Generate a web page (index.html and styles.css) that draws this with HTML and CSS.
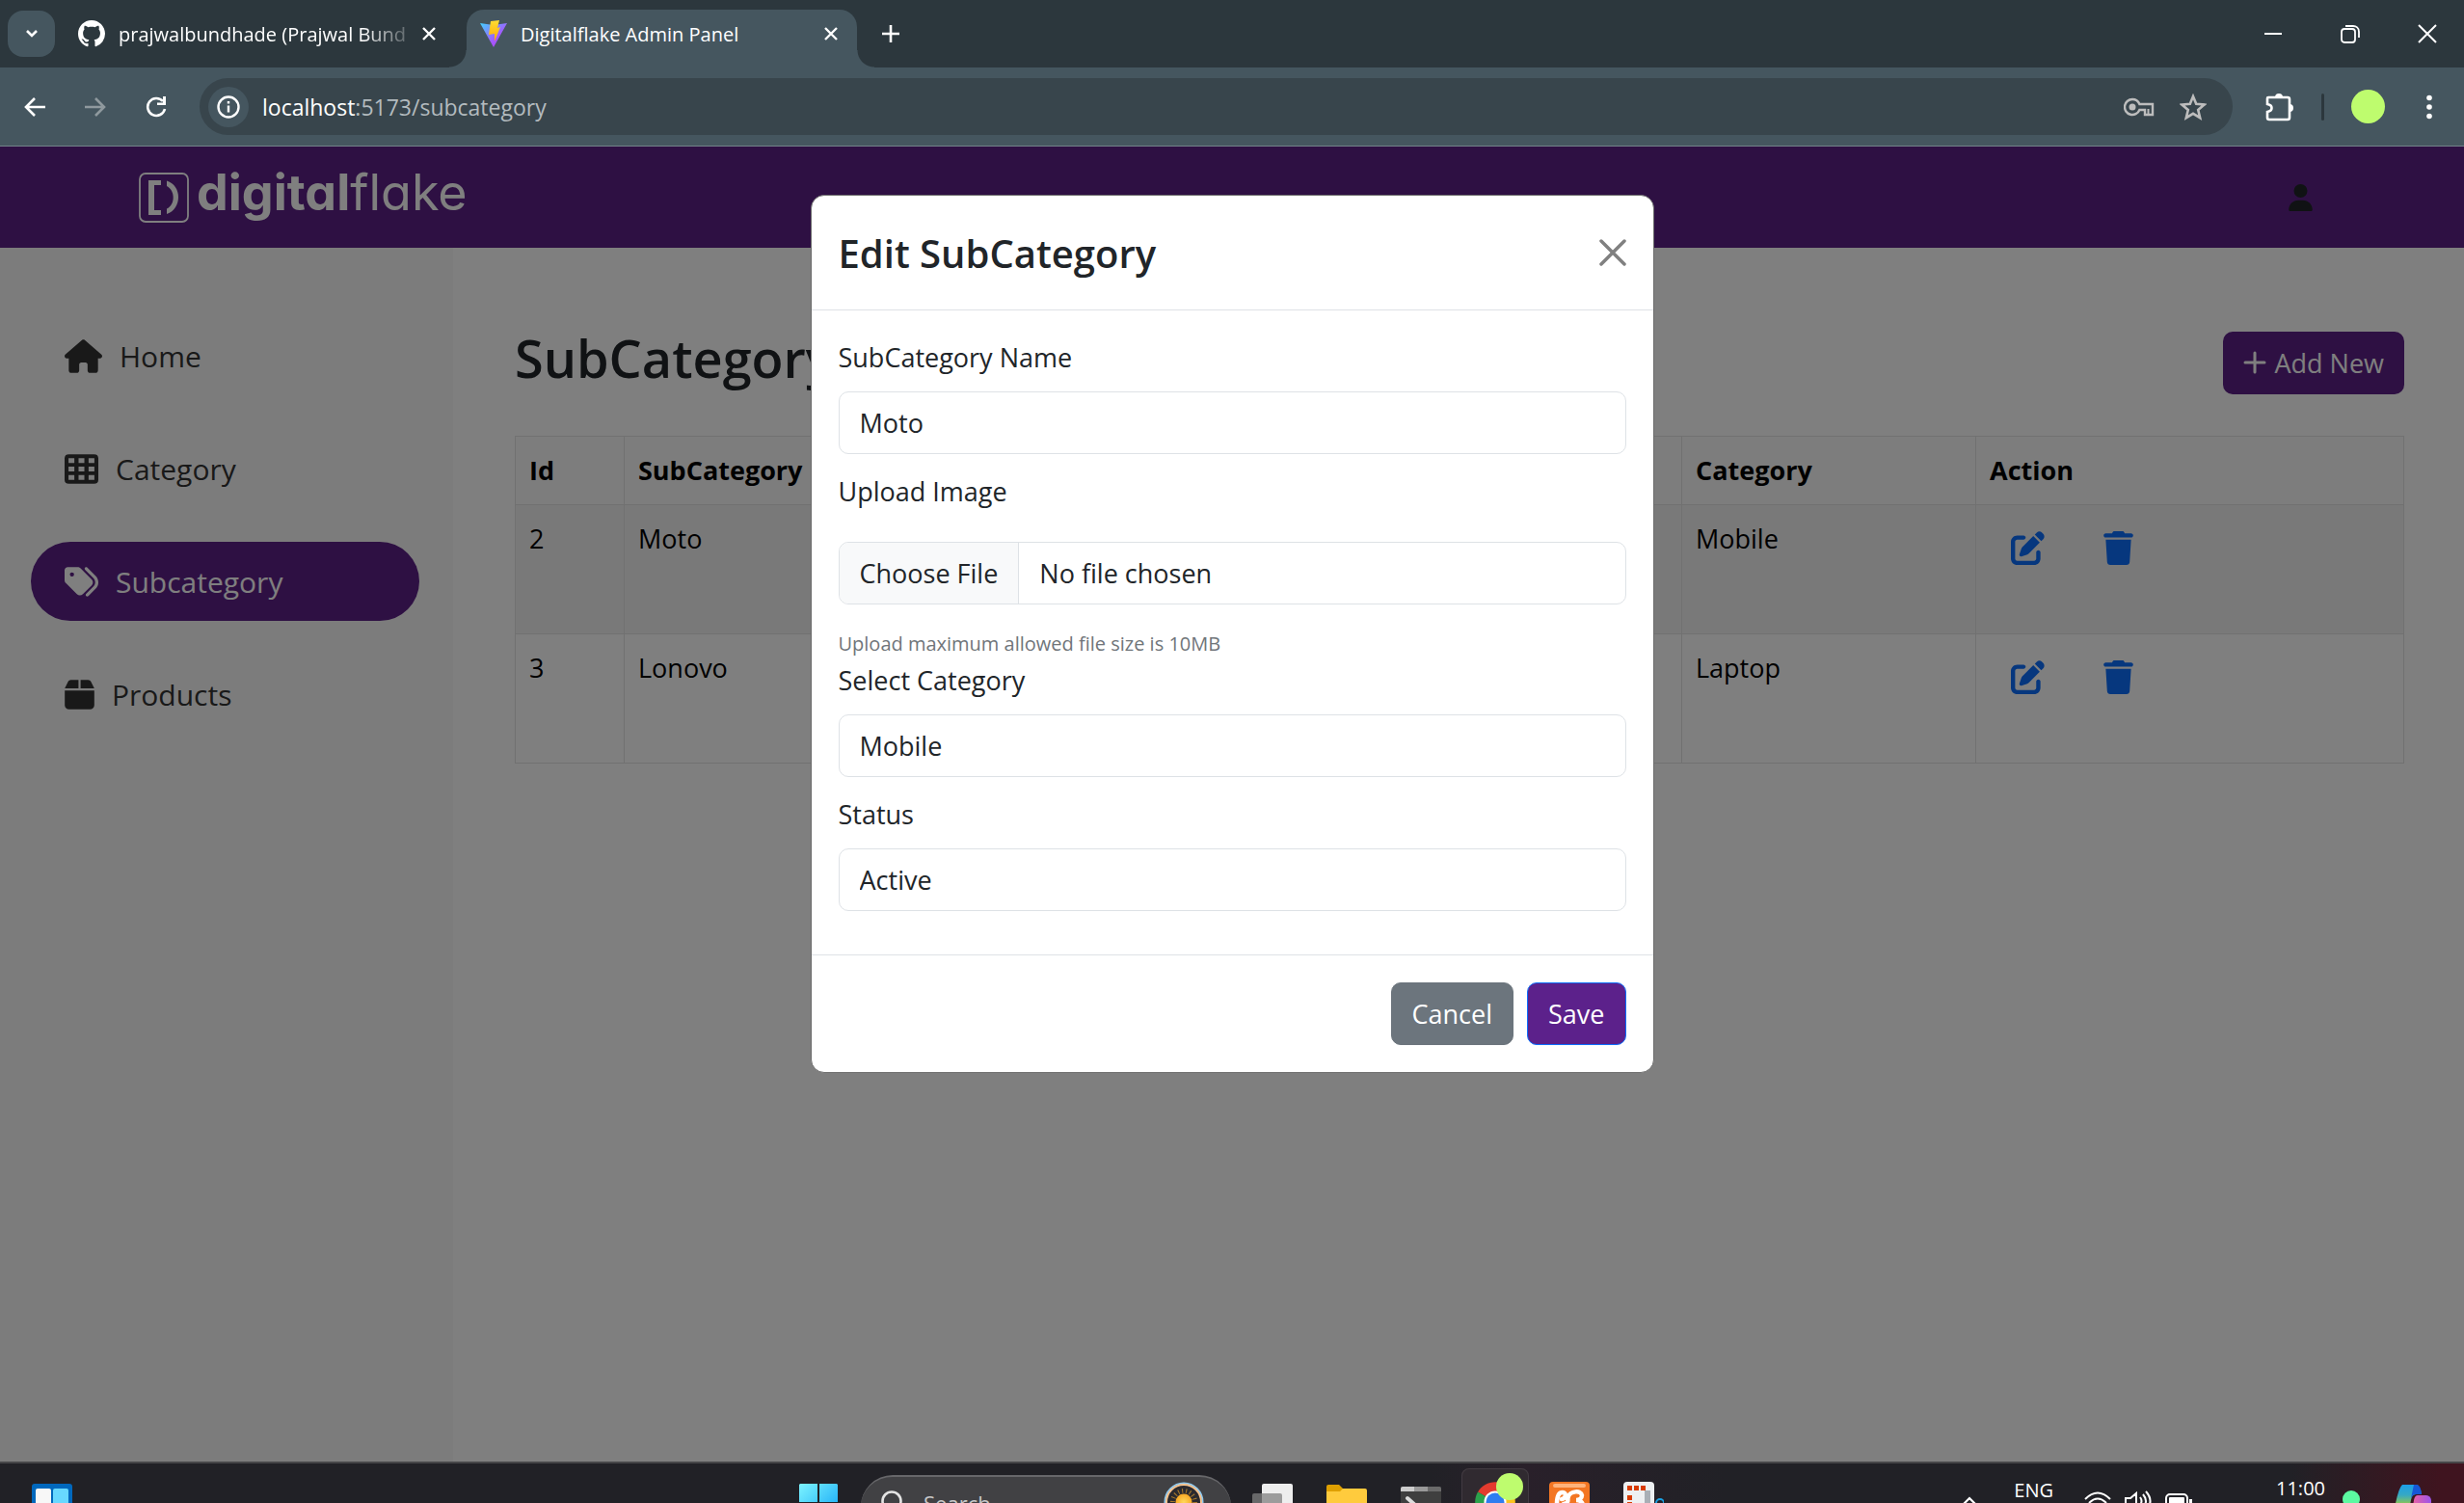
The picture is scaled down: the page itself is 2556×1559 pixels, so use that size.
FILE: index.html
```html
<!DOCTYPE html>
<html lang="en">
<head>
<meta charset="utf-8">
<title>Digitalflake Admin Panel</title>
<link rel="stylesheet" href="styles.css">
</head>
<body>
<div class="screen">

  <div class="tabstrip">
    <button class="tab-search" aria-label="Search tabs"><svg width="14" height="14" viewBox="0 0 14 14"><path d="M2 4l5 5 5-5" fill="none" stroke="#fff" stroke-width="2.6"/></svg></button>
    <div class="tab">
      <svg class="favicon" viewBox="0 0 16 16"><path fill="#fff" d="M8 0C3.58 0 0 3.58 0 8c0 3.54 2.29 6.53 5.47 7.59.4.07.55-.17.55-.38 0-.19-.01-.82-.01-1.49-2.01.37-2.53-.49-2.69-.94-.09-.23-.48-.94-.82-1.13-.28-.15-.68-.52-.01-.53.63-.01 1.08.58 1.23.82.72 1.21 1.87.87 2.33.66.07-.52.28-.87.51-1.07-1.78-.2-3.64-.89-3.64-3.95 0-.87.31-1.59.82-2.15-.08-.2-.36-1.02.08-2.12 0 0 .67-.21 2.2.82.64-.18 1.32-.27 2-.27s1.36.09 2 .27c1.53-1.04 2.2-.82 2.2-.82.44 1.1.16 1.92.08 2.12.51.56.82 1.27.82 2.15 0 3.07-1.87 3.75-3.65 3.95.29.25.54.73.54 1.48 0 1.07-.01 1.93-.01 2.2 0 .21.15.46.55.38A8.01 8.01 0 0016 8c0-4.42-3.58-8-8-8z"/></svg>
      <span class="tab-title faded">prajwalbundhade (Prajwal Bund</span>
      <button class="tab-close" aria-label="Close tab"><svg width="14" height="14" viewBox="0 0 14 14"><path d="M1 1l12 12M13 1L1 13" stroke="#fff" stroke-width="2.4"/></svg></button>
    </div>
    <div class="tab active">
      <svg class="favicon" viewBox="0 0 28 28"><defs><linearGradient id="va" x1="0" y1="0" x2="1" y2="1"><stop offset="0" stop-color="#41d1ff"/><stop offset=".6" stop-color="#a35bff"/><stop offset="1" stop-color="#bd34fe"/></linearGradient><linearGradient id="vb" x1="0" y1="0" x2="0" y2="1"><stop offset="0" stop-color="#ffdd35"/><stop offset="1" stop-color="#ffa800"/></linearGradient></defs><path d="M0 3l14 2 14-2-14 25z" fill="url(#va)"/><path d="M11 1l9-1-2 8 3-1-6 15 0-8-6 1z" fill="url(#vb)"/></svg>
      <span class="tab-title">Digitalflake Admin Panel</span>
      <button class="tab-close" aria-label="Close tab"><svg width="14" height="14" viewBox="0 0 14 14"><path d="M1 1l12 12M13 1L1 13" stroke="#fff" stroke-width="2.4"/></svg></button>
    </div>
    <button class="new-tab" aria-label="New tab"><svg width="18" height="18" viewBox="0 0 18 18"><path d="M9 0v18M0 9h18" stroke="#fff" stroke-width="2.6"/></svg></button>
    <div class="window-buttons">
      <button aria-label="Minimize"><svg width="20" height="20" viewBox="0 0 20 20"><path d="M1 10h18" stroke="#fff" stroke-width="2"/></svg></button>
      <button aria-label="Restore"><svg width="20" height="20" viewBox="0 0 20 20"><g fill="none" stroke="#fff" stroke-width="1.8"><rect x="1" y="5" width="14" height="14" rx="3"/><path d="M5 2h8c3 0 6 2 6 6v6"/></g></svg></button>
      <button aria-label="Close"><svg width="20" height="20" viewBox="0 0 20 20"><path d="M1 1l18 18M19 1L1 19" stroke="#fff" stroke-width="2"/></svg></button>
    </div>
  </div>

  <div class="toolbar">
    <button class="nav-button" aria-label="Back"><svg width="22" height="22" viewBox="0 0 22 22"><path d="M22 11H2M11 2l-9 9 9 9" fill="none" stroke="#fff" stroke-width="2.6"/></svg></button>
    <button class="nav-button" aria-label="Forward"><svg width="22" height="22" viewBox="0 0 22 22"><path d="M0 11h20M11 2l9 9-9 9" fill="none" stroke="#8f999e" stroke-width="2.6"/></svg></button>
    <button class="nav-button" aria-label="Reload"><svg width="22" height="22" viewBox="0 0 22 22"><path d="M18 5A9 9 0 1 0 20 13" fill="none" stroke="#fff" stroke-width="2.6"/><path d="M21 0v9h-9V6.500h6V0z" fill="#fff"/></svg></button>
    <div class="omnibox">
      <button class="site-info" aria-label="Site information"><svg width="24" height="24" viewBox="0 0 24 24"><circle cx="12" cy="12" r="10.500" fill="none" stroke="#fff" stroke-width="2.400"/><path d="M12 10.500v7M12 6v2.600" stroke="#fff" stroke-width="2.400"/></svg></button>
      <span class="url"><b>localhost</b>:5173/subcategory</span>
      <button class="omni-icon" aria-label="Passwords"><svg width="32" height="20" viewBox="0 0 32 20"><path d="M9 2a8 8 0 1 0 7.400 11H22v5h8V7H16.400A8 8 0 0 0 9 2z" fill="none" stroke="#bdbdbd" stroke-width="2.400"/><circle cx="9" cy="10" r="3.500" fill="#bdbdbd"/><path d="M25.500 12v5" stroke="#bdbdbd" stroke-width="2"/></svg></button>
      <button class="omni-icon" aria-label="Bookmark"><svg width="28" height="28" viewBox="0 0 28 28"><path d="M14 3l3.200 7.800 8.400.7-6.400 5.500 2 8.200L14 20.800l-7.200 4.400 2-8.200-6.400-5.500 8.400-.7z" fill="none" stroke="#bdbdbd" stroke-width="2.600"/></svg></button>
    </div>
    <button class="ext" aria-label="Extensions"><svg width="30" height="30" viewBox="0 0 30 30"><path d="M3 5h20q2 0 2 2v19q0 2-2 2H4q-2 0-2-2v-6c6-1 6-7 0-8V6q0-1 1-1z" fill="none" stroke="#fff" stroke-width="2.600"/><path d="M10 5a4 4 0 0 1 8 0zM25 12a4 4 0 0 1 0 8z" fill="#fff"/></svg></button>
    <span class="divider"></span>
    <button class="avatar" aria-label="Profile"></button>
    <button class="more" aria-label="Menu"><svg width="6" height="26" viewBox="0 0 6 26"><g fill="#fff"><circle cx="3" cy="3.500" r="2.800"/><circle cx="3" cy="13" r="2.800"/><circle cx="3" cy="22.500" r="2.800"/></g></svg></button>
  </div>

  <div class="page">
    <header class="app-header">
      <a class="brand" href="#">
        <svg width="52" height="52" viewBox="0 0 52 52"><rect x="1" y="1" width="50" height="50" rx="6" fill="none" stroke="#fff" stroke-width="1.800"/><path d="M23 8H10v36h13v-5h-7V13h7z" fill="#fff"/><path d="M29 8.500c16 5 16 29 0 34.500v-5.500c9-4 9-19 0-23.500z" fill="#fff"/></svg>
        <span><b>digital</b>flake</span>
      </a>
      <button class="user" aria-label="Account"><svg width="25" height="28" viewBox="0 0 448 512"><path fill="#212529" d="M224 256A128 128 0 1 0 224 0a128 128 0 1 0 0 256zm-45.700 48C79.800 304 0 383.800 0 482.300C0 498.700 13.300 512 29.700 512l388.600 0c16.400 0 29.700-13.300 29.700-29.700C448 383.800 368.200 304 269.700 304l-91.400 0z"/></svg></button>
    </header>

    <div class="columns">
      <nav class="sidebar">
        <a href="#"><svg width="39" height="35" viewBox="0 0 576 512"><path d="M575.8 255.5c0 18-15 32.1-32 32.1l-32 0 .7 160.2c0 2.7-.2 5.4-.5 8.1l0 16.2c0 22.1-17.9 40-40 40l-16 0c-1.100 0-2.200 0-3.300-.1c-1.400 .1-2.800 .1-4.200 .1L416 512l-24 0c-22.100 0-40-17.900-40-40l0-24 0-64c0-17.700-14.300-32-32-32l-64 0c-17.700 0-32 14.300-32 32l0 64 0 24c0 22.100-17.900 40-40 40l-24 0-31.900 0c-1.500 0-3-.1-4.500-.2c-1.200 .1-2.400 .2-3.600 .2l-16 0c-22.100 0-40-17.900-40-40l0-112c0-.9 0-1.900 .1-2.800l0-69.700-32 0c-18 0-32-14-32-32.100c0-9 3-17 10-24L266.400 8c7-7 15-8 22-8s15 2 21 7L564.800 231.500c8 7 12 15 11 24z"/></svg>Home</a>
        <a href="#"><svg width="35" height="35" viewBox="0 0 512 512"><path fill-rule="evenodd" d="M64 32h384q64 0 64 64v320q0 64-64 64H64q-64 0-64-64V96q0-64 64-64zM60 92v72h88V92zM212 92v72h88V92zM364 92v72h88V92zM60 220v72h88v-72zM212 220v72h88v-72zM364 220v72h88v-72zM60 348v72h88v-72zM212 348v72h88v-72zM364 348v72h88v-72z"/></svg>Category</a>
        <a class="current" href="#"><svg width="35" height="35" viewBox="0 0 512 512"><path d="M345 39.100L472.800 168.400c52.400 53 52.400 138.200 0 191.200L360.800 472.900c-9.300 9.400-24.500 9.500-33.900 .2s-9.500-24.500-.2-33.900L438.600 325.900c33.900-34.300 33.900-89.400 0-123.700L310.900 72.900c-9.300-9.400-9.200-24.600 .2-33.900s24.600-9.200 33.900 .2zM0 229.500L0 80C0 53.500 21.500 32 48 32l149.500 0c17 0 33.300 6.700 45.300 18.700l168 168c25 25 25 65.500 0 90.500L277.300 442.700c-25 25-65.500 25-90.500 0l-168-168C6.700 262.700 0 246.500 0 229.500zM144 144a32 32 0 1 0 -64 0 32 32 0 1 0 64 0z"/></svg>Subcategory</a>
        <a href="#"><svg width="31" height="35" viewBox="0 0 448 512"><path d="M50.700 58.500L0 160l208 0 0-128L93.700 32C75.500 32 58.900 42.300 50.700 58.500zM240 160l208 0L397.300 58.500C389.100 42.300 372.500 32 354.300 32L240 32l0 128zm208 32L0 192 0 416c0 35.300 28.700 64 64 64l320 0c35.300 0 64-28.700 64-64l0-224z"/></svg>Products</a>
      </nav>

      <main class="content">
        <div class="content-head">
          <h1>SubCategory</h1>
          <button class="add"><svg width="24" height="24" viewBox="0 0 24 24"><path d="M12 2v20M2 12h20" stroke="#fff" stroke-width="3" stroke-linecap="round"/></svg>Add New</button>
        </div>
        <table>
          <colgroup><col class="c-id"><col class="c-name"><col class="c-image"><col class="c-cat"><col></colgroup>
          <thead><tr><th>Id</th><th>SubCategory</th><th></th><th>Category</th><th>Action</th></tr></thead>
          <tbody>
            <tr><td>2</td><td>Moto</td><td></td><td>Mobile</td><td><div class="actions">
              <button aria-label="Edit"><svg width="35" height="35" viewBox="0 0 512 512"><use href="#pen"/></svg></button>
              <button aria-label="Delete"><svg width="31" height="35" viewBox="0 0 448 512"><use href="#bin"/></svg></button></div></td></tr>
            <tr><td>3</td><td>Lonovo</td><td></td><td>Laptop</td><td><div class="actions">
              <button aria-label="Edit"><svg width="35" height="35" viewBox="0 0 512 512"><path id="pen" fill="#0d6efd" d="M471.600 21.700c-21.900-21.900-57.300-21.900-79.200 0L362.300 51.700l97.900 97.900 30.100-30.100c21.900-21.900 21.900-57.300 0-79.200L471.600 21.700zm-299.200 220c-6.100 6.100-10.800 13.600-13.500 21.900l-29.600 88.800c-2.900 8.600-.6 18.100 5.800 24.600s15.900 8.700 24.600 5.800l88.800-29.600c8.200-2.700 15.700-7.400 21.900-13.500L437.700 172.300 339.700 74.300 172.400 241.700zM96 64C43 64 0 107 0 160L0 416c0 53 43 96 96 96l256 0c53 0 96-43 96-96l0-96c0-17.700-14.300-32-32-32s-32 14.300-32 32l0 96c0 17.700-14.300 32-32 32L96 448c-17.700 0-32-14.300-32-32l0-256c0-17.700 14.300-32 32-32l96 0c17.700 0 32-14.300 32-32s-14.300-32-32-32L96 64z"/></svg></button>
              <button aria-label="Delete"><svg width="31" height="35" viewBox="0 0 448 512"><path id="bin" fill="#0d6efd" d="M135.200 17.700L128 32 32 32C14.300 32 0 46.300 0 64S14.300 96 32 96l384 0c17.700 0 32-14.300 32-32s-14.300-32-32-32l-96 0-7.200-14.300C307.400 6.800 296.300 0 284.200 0L163.800 0c-12.100 0-23.200 6.800-28.600 17.700zM416 128L32 128 53.200 467c1.600 25.300 22.600 45 47.900 45l245.800 0c25.300 0 46.300-19.700 47.900-45L416 128z"/></svg></button></div></td></tr>
          </tbody>
        </table>
      </main>
    </div>

    <div class="backdrop">
      <form class="modal" role="dialog" aria-labelledby="dialog-title">
        <div class="modal-head">
          <h2 id="dialog-title">Edit SubCategory</h2>
          <button type="button" class="modal-close" aria-label="Close"><svg width="28" height="28" viewBox="0 0 28 28"><path d="M2 2l24 24M26 2L2 26" stroke="#808080" stroke-width="3.500" stroke-linecap="round"/></svg></button>
        </div>
        <div class="modal-body">
          <label for="name">SubCategory Name</label>
          <input id="name" class="control" type="text" value="Moto">
          <label for="image">Upload Image</label>
          <input id="image" class="control file" type="file">
          <small>Upload maximum allowed file size is 10MB</small>
          <label for="category">Select Category</label>
          <select id="category" class="control"><option>Mobile</option></select>
          <label for="status">Status</label>
          <select id="status" class="control"><option>Active</option></select>
        </div>
        <div class="modal-foot">
          <button type="button" class="btn cancel">Cancel</button>
          <button type="button" class="btn save">Save</button>
        </div>
      </form>
    </div>
  </div>

  <div class="taskbar">
    <button class="widgets" aria-label="Widgets"><svg width="42" height="42" viewBox="0 0 42 42"><rect width="42" height="42" rx="3" fill="#0068bd"/><rect x="4" y="5" width="16" height="36" rx="2" fill="#f7f7f7"/><rect x="22" y="5" width="16" height="36" rx="2" fill="#68d8ff"/></svg></button>
    <div class="dock">
      <button class="start" aria-label="Start"><svg width="40" height="40" viewBox="0 0 40 40"><defs><linearGradient id="win" x1="0" y1="0" x2="1" y2="1"><stop offset="0" stop-color="#7df4ff"/><stop offset="1" stop-color="#0aa0f5"/></linearGradient></defs><path d="M1 0h18v19H0V1zM21 0h18l1 1v18H21zM0 21h19v19H0zM21 21h19v19H21z" fill="url(#win)"/></svg></button>
      <button class="search"><svg width="22" height="30" viewBox="0 0 22 30"><circle cx="11" cy="11" r="9.500" fill="#414144" stroke="#e4e4e4" stroke-width="2.600"/></svg><span>Search</span>
        <svg class="sun" width="42" height="42" viewBox="0 0 42 42"><defs><radialGradient id="sn"><stop offset="0" stop-color="#ffd95a"/><stop offset="1" stop-color="#f8a824"/></radialGradient></defs><circle cx="21" cy="21" r="19.500" fill="#2b2a2e" stroke="#8fc9ef" stroke-width="2"/><circle cx="21" cy="21" r="18" fill="none" stroke="#f7c48f" stroke-width="2"/><circle cx="21" cy="21" r="11.500" fill="none" stroke="#a87a2c" stroke-width="5" stroke-dasharray="1 3"/><circle cx="21" cy="21" r="8.500" fill="url(#sn)"/></svg></button>
      <button class="taskview" aria-label="Task view"><svg width="42" height="40" viewBox="0 0 42 40"><rect x="10" width="32" height="36" rx="2" fill="#eee"/><rect y="10" width="31" height="30" rx="2" fill="#808080" opacity=".75"/></svg></button>
      <button class="files" aria-label="File Explorer"><svg width="42" height="36" viewBox="0 0 42 36"><path d="M0 2q0-2 2-2h11l4 4v10H0z" fill="#dfa000"/><path d="M0 7h14l3-3h23q2 0 2 2v30H0z" fill="#ffcb3d"/></svg></button>
      <button class="terminal" aria-label="Terminal"><svg width="42" height="36" viewBox="0 0 42 36"><rect width="42" height="36" rx="2" fill="#3f3f3f"/><path d="M0 5V2q0-2 2-2h12v5z" fill="#ccc"/><path d="M14 0h14v5H14z" fill="#999"/><path d="M28 0h12q2 0 2 2v3H28z" fill="#6a6a6a"/><path d="M7 12l9 8-9 8" fill="none" stroke="#ddd" stroke-width="4" stroke-linecap="round"/></svg></button>
      <button class="chrome" aria-label="Google Chrome"><svg width="70" height="50" viewBox="0 0 70 50"><path d="M35 35L17 24.500A21 21 0 0 1 53 24.500z" fill="#e33b2e"/><path d="M35 35L17 24.500A21 21 0 0 0 35 56z" fill="#2ba24c"/><path d="M35 35l18-10.500A21 21 0 0 1 35 56z" fill="#fcc31e"/><circle cx="35" cy="35" r="11.500" fill="#fff"/><circle cx="35" cy="35" r="9.500" fill="#2f7df0"/><circle cx="50" cy="19" r="14" fill="#befc6e"/></svg></button>
      <button class="xampp" aria-label="XAMPP"><svg width="42" height="42" viewBox="0 0 42 42"><rect width="42" height="42" rx="4" fill="#f37623"/><rect x="4" y="2" width="34" height="4" rx="2" fill="#ffb37c"/><path d="M8 23c0-6 1-12 6-12 4 0 4 6-1 7M20 15c2-5 13-7 14-1 0 3-3 5-6 5 4 0 7 2 7 6s-4 7-8 6M20 15c-2 4 2 7-5 8" fill="none" stroke="#fff" stroke-width="4.500" stroke-linecap="round"/></svg></button>
      <button class="snip" aria-label="Snipping Tool"><svg width="42" height="42" viewBox="0 0 42 42"><rect width="32" height="40" rx="4" fill="#eef0f2"/><path d="M22 9h6v31h-6z" fill="#a9afb6"/><path d="M6.500 40V13M4 6.500h19" fill="none" stroke="#d83b01" stroke-width="5" stroke-dasharray="5 2"/><circle cx="38" cy="22" r="4" fill="none" stroke="#1a9fe0" stroke-width="2"/></svg></button>
    </div>
    <div class="tray">
      <button class="chev" aria-label="Show hidden icons"><svg width="16" height="10" viewBox="0 0 16 10"><path d="M1 9l7-7 7 7" fill="none" stroke="#fff" stroke-width="2.200"/></svg></button>
      <span class="lang">ENG</span>
      <svg class="wifi" width="28" height="20" viewBox="0 0 28 20"><g fill="none" stroke="#fff" stroke-width="2"><path d="M1 8q13-13 26 0M5 12q9-9 18 0M9 16q5-5 10 0"/></g></svg>
      <svg class="sound" width="28" height="22" viewBox="0 0 28 22"><g fill="none" stroke="#fff" stroke-width="2"><path d="M1 8h5l6-5v17l-6-5H1zM16 7q3 4 0 8M19 4q6 7 0 14M22 1q9 10 0 20"/></g></svg>
      <svg class="battery" width="28" height="18" viewBox="0 0 28 18"><rect x="1" y="1" width="22" height="16" rx="4" fill="none" stroke="#fff" stroke-width="2"/><rect x="4" y="4" width="16" height="10" rx="1" fill="#fff"/><path d="M25 6h3v6h-3z" fill="#fff"/></svg>
      <span class="clock">11:00</span>
      <span class="status-dot"></span>
      <svg class="copilot" width="40" height="36" viewBox="0 0 40 36"><defs><linearGradient id="cp" x1="0" y1="0" x2="0" y2="1"><stop offset="0" stop-color="#1b9de8"/><stop offset=".3" stop-color="#36a9c4"/><stop offset=".6" stop-color="#9acb3e"/></linearGradient><linearGradient id="cq"><stop offset="0" stop-color="#f2619b"/><stop offset="1" stop-color="#9a55ec"/></linearGradient></defs><path d="M10 0h15q3 0 5 10h-6q-4 0-5 6l-4 20H0Q5 4 10 0z" fill="url(#cp)"/><path d="M22 0h3q4 0 5 10h-6q-3 0-5 4z" fill="#1557d6"/><path d="M26 11h9q6 1 5 9l-3 16H19l3-20q1-5 4-5z" fill="url(#cq)"/></svg>
    </div>
  </div>
</div>
</body>
</html>
```
FILE: styles.css
```css
* { box-sizing: border-box; }

body {
  margin: 0;
  font-family: "Open Sans", "Noto Sans", sans-serif;
  font-size: 27px;
  color: #212529;
}

button {
  display: block;
  margin: 0;
  padding: 0;
  border: 0;
  background: none;
  font: inherit;
  color: inherit;
}

svg { display: block; flex: none; }

.screen {
  display: flex;
  flex-direction: column;
  height: 100vh;
  overflow: hidden;
}

/* Browser tabs */
.tabstrip {
  display: flex;
  align-items: flex-end;
  height: 70px;
  padding-left: 8px;
  background: #2c373d;
  color: #fff;
  font-size: 20px;
}

.tab-search {
  display: grid;
  place-items: center;
  width: 49px;
  height: 48px;
  margin: 0 10px 11px 0;
  border-radius: 16px;
  background: #45565f;
}

.tab {
  position: relative;
  display: flex;
  align-items: center;
  width: 405px;
  height: 60px;
  padding: 0 20px 10px 14px;
  border-radius: 18px 18px 0 0;
}

.tab.active { background: #45565f; margin-left: 12px; }

.tab.active::before,
.tab.active::after {
  content: "";
  position: absolute;
  bottom: 0;
  width: 18px;
  height: 18px;
}

.tab.active::before { left: -18px; background: radial-gradient(circle at 0 0, transparent 17px, #45565f 18px); }
.tab.active::after { right: -18px; background: radial-gradient(circle at 100% 0, transparent 17px, #45565f 18px); }

.favicon { width: 28px; height: 28px; margin-right: 14px; }

.tab-title {
  flex: 1;
  white-space: nowrap;
}

.faded {
  margin-right: 14px;
  -webkit-mask-image: linear-gradient(90deg, #000 84%, rgba(0, 0, 0, .3) 97%);
  mask-image: linear-gradient(90deg, #000 84%, rgba(0, 0, 0, .3) 97%);
}

.new-tab { margin: 0 0 26px 26px; }

.window-buttons {
  display: flex;
  gap: 60px;
  margin: 0 28px 25px auto;
}

/* Address bar */
.toolbar {
  display: flex;
  align-items: center;
  height: 82px;
  padding: 0 33px 0 25px;
  border-bottom: 1px solid #74828a;
  background: #45565f;
}

.nav-button { margin-right: 41px; }
.nav-button:nth-child(3) { margin-right: 34px; }

.omnibox {
  display: flex;
  flex: 1;
  align-items: center;
  height: 59px;
  padding: 0 27px 0 9px;
  border-radius: 30px;
  background: #38454c;
}

.site-info {
  display: grid;
  place-items: center;
  width: 42px;
  height: 42px;
  margin-right: 14px;
  border-radius: 50%;
  background: #45565f;
}

.url { flex: 1; font-size: 23px; color: #b3bbbf; }
.url b { font-weight: 400; color: #fff; }
.omni-icon { margin-left: 26px; }
.ext { margin-left: 34px; }
.divider { width: 3px; height: 28px; margin: 0 28px; border-radius: 2px; background: #2c373d; }
.avatar { width: 35px; height: 35px; margin-right: 43px; border-radius: 50%; background: #befc6e; }

/* Application */
.page {
  position: relative;
  display: flex;
  flex: 1;
  flex-direction: column;
  min-height: 0;
  background: #fff;
}

.app-header {
  display: flex;
  align-items: center;
  justify-content: space-between;
  height: 105px;
  padding: 0 157px 0 144px;
  background: #5c2087;
}

.brand {
  display: flex;
  align-items: center;
  gap: 8px;
  color: #fff;
  font-family: Inter, sans-serif;
  font-size: 52px;
  font-weight: 400;
  font-feature-settings: "cv11";
  line-height: 52px;
  text-decoration: none;
}

.brand span { padding-bottom: 10px; }
.brand b { font-weight: 700; }

.columns { display: flex; flex: 1; }

.sidebar {
  display: flex;
  flex-direction: column;
  gap: 35px;
  width: 470px;
  padding: 71px 35px 0 32px;
  background: #f9f9f9;
}

.sidebar a {
  display: flex;
  align-items: center;
  gap: 18px;
  height: 82px;
  padding: 0 35px;
  border-radius: 41px;
  color: #333;
  fill: #333;
  font-size: 30px;
  text-decoration: none;
}

.sidebar .current { background: #5c2087; color: #fff; fill: #fff; }

.content { flex: 1; padding: 72px 62px 0 64px; }

.content-head {
  display: flex;
  align-items: center;
  justify-content: space-between;
  height: 94px;
  margin-bottom: 29px;
}

h1 { margin: 0; padding-bottom: 10px; font-size: 54px; font-weight: 600; }

.add {
  display: flex;
  align-items: center;
  gap: 8px;
  height: 65px;
  padding: 0 21px;
  border-radius: 10px;
  background: #5c2087;
  color: #fff;
}

table {
  width: 100%;
  table-layout: fixed;
  border-collapse: collapse;
  color: #000;
  line-height: 42px;
}

.c-id { width: 113px; }
.c-name { width: 398px; }
.c-image { width: 699px; }
.c-cat { width: 305px; }

th, td {
  height: 134px;
  padding: 14px;
  border: 1px solid #e3e3e3;
  text-align: left;
  vertical-align: top;
}

th { height: 71px; font-weight: 700; background: #fafafa; }
tbody tr:first-child { background: #f2f2f2; }

.actions { display: flex; gap: 61px; padding: 13px 22px; }

/* Dialog */
.backdrop {
  position: absolute;
  inset: 0;
  display: flex;
  align-items: flex-start;
  justify-content: center;
  padding-top: 50px;
  background: rgba(0, 0, 0, .5);
}

.modal {
  width: 875px;
  border: 1px solid #6d6d6d;
  border-radius: 14px;
  background: #fff;
}

.modal-head {
  display: flex;
  align-items: center;
  justify-content: space-between;
  height: 119px;
  padding: 0 28px;
  border-bottom: 1px solid #dee2e6;
}

h2 { margin: 0; font-size: 40px; font-weight: 600; }

.modal-body {
  display: flex;
  flex-direction: column;
  padding: 28px 28px 45px;
}

label { margin-bottom: 14px; line-height: 42px; }
.control + label { margin-top: 18px; }

.control {
  width: 100%;
  height: 65px;
  padding: 0 21px;
  border: 1px solid #dee2e6;
  border-radius: 10px;
  background: #fff;
  color: #212529;
  font: inherit;
  appearance: none;
}

.file { margin-top: 17px; padding: 0; line-height: 63px; overflow: hidden; }

.file::file-selector-button {
  height: 63px;
  margin: 0 21px 0 0;
  padding: 0 21px;
  border: 0;
  border-right: 1px solid #dee2e6;
  background: #f8f9fa;
  color: #212529;
  font: inherit;
}

small { margin-top: 24px; color: #70757a; font-size: 20px; line-height: 34px; }

.modal-foot {
  display: flex;
  justify-content: flex-end;
  gap: 14px;
  padding: 28px;
  border-top: 1px solid #dee2e6;
}

.btn {
  height: 65px;
  padding: 0 21px;
  border: 1px solid #6c757d;
  border-radius: 10px;
  background: #6c757d;
  color: #fff;
}

.save { border-color: #0d6efd; background: #5c218b; }

/* Taskbar, partly below the window edge */
.taskbar {
  display: grid;
  grid-template-columns: 1fr auto 1fr;
  align-items: start;
  height: 43px;
  padding: 0 34px 0 33px;
  overflow: hidden;
  border-top: 2px solid #464648;
  background: linear-gradient(90deg, #212126 58%, #29202a 62%, #212126 70%, #212126 93%, #3f141f 99%);
  color: #fff;
  font-size: 20px;
  line-height: 28px;
}

.widgets { margin-top: 21px; }

.dock { display: flex; align-items: flex-start; height: 41px; }
.start { margin: 21px 24px 0 0; }

.search {
  display: flex;
  align-items: flex-start;
  gap: 22px;
  width: 384px;
  height: 66px;
  margin: 12px 22px 0 0;
  padding: 13px 28px 0 21px;
  border-top: 2px solid #67676a;
  border-radius: 33px;
  background: #414144;
  color: #c8c8c8;
  font-size: 22px;
}

.search svg:first-child { margin-top: 1px; }
.search .sun { margin: -8px 0 0 auto; }
.taskview { margin: 21px 35px 0 0; }
.files { margin: 22px 35px 0 0; }
.terminal { margin: 24px 21px 0 0; }

.chrome {
  margin: 5px 21px 0 0;
  border-radius: 8px;
  background: #302a30;
  box-shadow: inset 0 0 0 1px #423b42;
}

.xampp { margin: 19px 35px 0 0; }
.snip { margin: 19px 0 0; }

.tray { display: flex; align-items: flex-start; justify-content: flex-end; }
.chev { margin: 34px 38px 0 0; }
.lang { margin: 14px 32px 0 0; }
.wifi { margin: 29px 14px 0 0; }
.sound { margin: 28px 14px 0 0; }
.battery { margin: 31px 87px 0 0; }
.clock { margin: 12px 18px 0 0; }
.status-dot { width: 18px; height: 18px; margin: 28px 34px 0 0; border-radius: 50%; background: #5cf9a1; }
.copilot { margin-top: 22px; }
```
